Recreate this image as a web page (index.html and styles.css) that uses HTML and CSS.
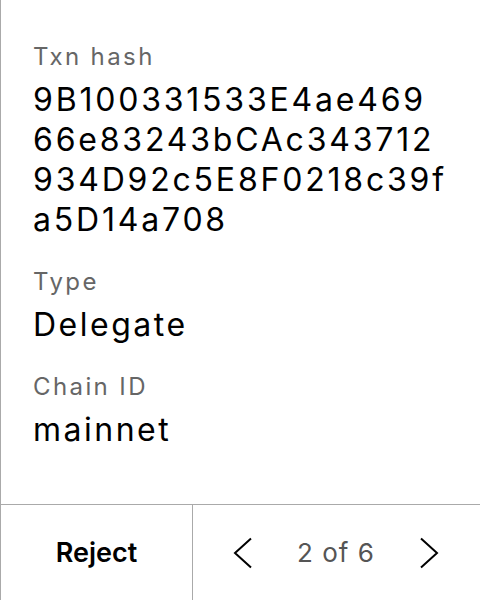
FILE: index.html
```html
<!DOCTYPE html>
<html>
<head>
<meta charset="utf-8">
<link rel="stylesheet" href="styles.css">
</head>
<body>
<div class="screen">
  <div class="content">
    <div class="field">
      <div class="label">Txn hash</div>
      <div class="value hash">9B100331533E4ae46966e83243bCAc343712934D92c5E8F0218c39fa5D14a708</div>
    </div>
    <div class="field">
      <div class="label">Type</div>
      <div class="value">Delegate</div>
    </div>
    <div class="field">
      <div class="label">Chain ID</div>
      <div class="value">mainnet</div>
    </div>
  </div>
  <div class="footer">
    <div class="reject">Reject</div>
    <div class="pager">
      <svg class="chev" width="20" height="32" viewBox="0 0 20 32"><polyline points="18,1.5 2,16 18,30.5" fill="none" stroke="#000" stroke-width="2"/></svg>
      <span class="count">2 of 6</span>
      <svg class="chev" width="20" height="32" viewBox="0 0 20 32"><polyline points="2,1.5 18,16 2,30.5" fill="none" stroke="#000" stroke-width="2"/></svg>
    </div>
  </div>
</div>
</body>
</html>
```
FILE: styles.css
```css
* { box-sizing: border-box; }
html, body { margin: 0; padding: 0; background: #fff; }
body { font-family: Inter, "Noto Sans", sans-serif; color: #000; }
.screen {
  width: 480px;
  height: 600px;
  border-left: 1px solid #aaa;
  display: flex;
  flex-direction: column;
}
.content {
  flex: 1;
  padding: 42px 33px 0 32px;
  display: flex;
  flex-direction: column;
  gap: 27px;
}
.label {
  font-size: 24px;
  line-height: 30px;
  letter-spacing: 2.4px;
  color: #666;
}
.value {
  font-size: 32px;
  line-height: 40px;
  letter-spacing: 2.5px;
  margin-top: 8px;
}
.hash { word-break: break-all; letter-spacing: 2.8px; }
.footer {
  height: 96px;
  border-top: 1px solid #aaa;
  display: grid;
  grid-template-columns: 192px 1fr;
}
.reject {
  border-right: 1px solid #aaa;
  display: flex;
  align-items: center;
  justify-content: center;
  font-size: 27px;
  font-weight: 600;
}
.pager {
  display: flex;
  align-items: center;
  justify-content: space-between;
  padding: 0 41px 0 40px;
}
.count { font-size: 26px; letter-spacing: 1px; color: #555; }
.chev { display: block; }
```
